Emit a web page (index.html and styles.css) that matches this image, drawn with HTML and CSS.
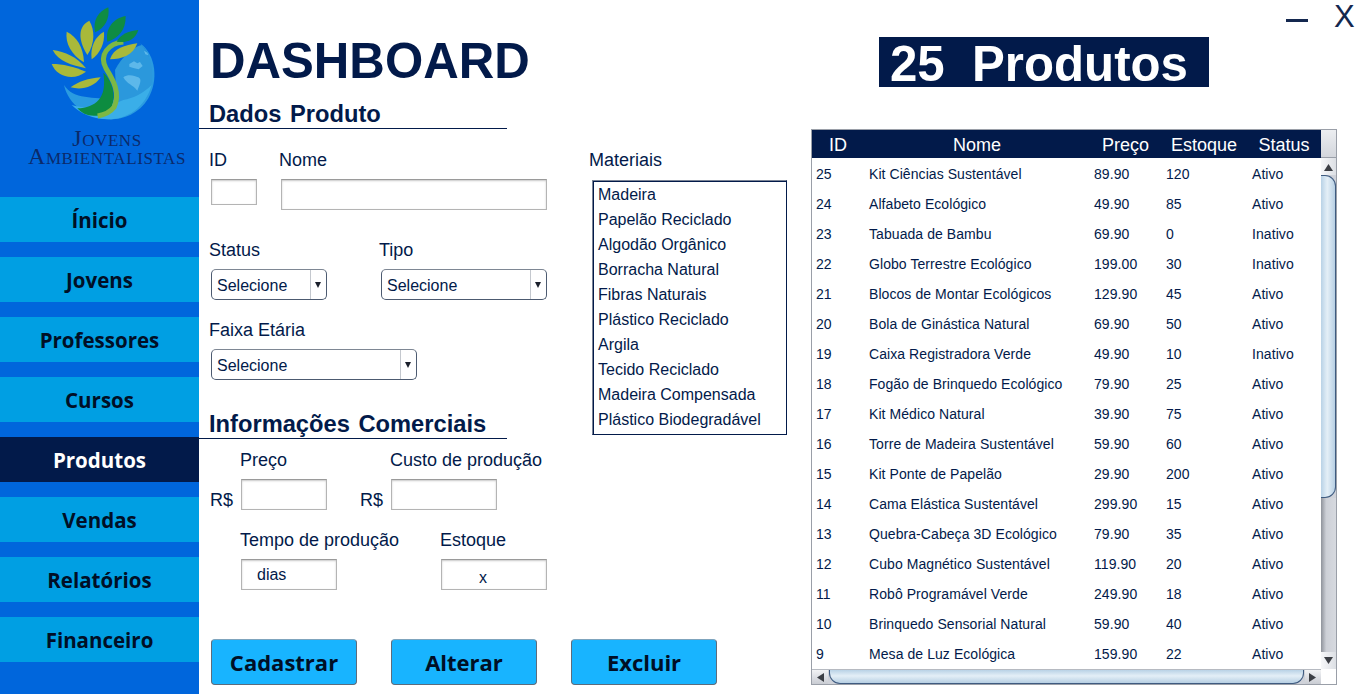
FILE: index.html
```html
<!DOCTYPE html>
<html lang="pt-BR">
<head>
<meta charset="utf-8">
<title>Dashboard</title>
<link rel="stylesheet" href="styles.css">
</head>
<body>
<div class="app">
  <aside class="sidebar">
    <div class="logo">
      <svg class="logo-art" viewBox="0 0 597 387" aria-hidden="true">
        <path fill="#2a9be0" d="M420 130C470 165 475 245 445 295C415 345 365 360 325 358C265 356 205 315 192 255C220 300 280 290 345 300C400 300 445 250 450 200C450 170 440 150 420 130Z"/>
        <path fill="#2b98dc" d="M345 210C365 170 400 140 425 135C460 170 465 240 445 280C420 300 390 310 350 305Z"/>
        <path fill="#3aaee8" d="M215 315C260 330 330 320 370 300C400 295 430 280 455 255C435 325 380 358 325 358C280 358 240 340 215 315Z"/>
        <path fill="#5db8ea" d="M370 232C385 220 405 228 415 232C428 238 418 255 412 272C400 255 380 252 370 232ZM388 192l14-8l10 6l8-4l8 12l-12 10l-16-4l-12-4ZM432 152l10 6l3 8l-9-3Z"/>
        <path fill="#0d8c40" d="M232 325C288 322 322 295 310 218C335 240 350 285 335 320C325 335 305 345 290 347C265 350 245 340 232 325Z"/>
        <path fill="none" stroke="#7db843" stroke-width="15" d="M370 126C325 130 296 165 318 205C340 240 362 280 342 322C330 338 310 345 293 348"/>
        <g fill="#a9b93a">
          <path d="M268 62C240 75 228 110 262 165C285 130 285 90 268 62Z"/>
          <path d="M200 95C195 130 215 165 252 187C250 140 230 110 200 95Z"/>
          <path d="M158 150C175 185 215 195 258 205C230 170 195 155 158 150Z"/>
          <path d="M155 192C170 230 220 245 258 215C220 200 190 192 155 192Z"/>
          <path d="M212 262C240 270 280 265 302 232C265 235 235 245 212 262Z"/>
          <path d="M312 95C285 110 270 140 275 178C300 160 315 130 312 95Z"/>
          <path d="M412 130C375 135 340 145 330 178C365 178 400 165 412 130Z"/>
        </g>
        <g fill="#0f8c43">
          <path d="M325 22C295 35 278 60 285 97C315 85 330 55 325 22Z"/>
          <path d="M377 48C340 55 315 85 322 125C355 115 378 90 377 48Z"/>
          <path d="M415 90C385 92 360 105 350 125C380 130 405 120 415 90Z"/>
        </g>
      </svg>
      <div class="logo-text">Jovens<br>Ambientalistas</div>
    </div>
    <nav class="nav">
      <a class="nav-item">Ínicio</a>
      <a class="nav-item">Jovens</a>
      <a class="nav-item">Professores</a>
      <a class="nav-item">Cursos</a>
      <a class="nav-item active">Produtos</a>
      <a class="nav-item">Vendas</a>
      <a class="nav-item">Relatórios</a>
      <a class="nav-item">Financeiro</a>
    </nav>
  </aside>

  <main class="form-col">
    <h1 class="title">DASHBOARD</h1>
    <h2 class="section">Dados Produto</h2>

    <div class="row row-first">
      <div class="field w-70"><label>ID</label><input class="input w-46 h-26"></div>
      <div class="field"><label>Nome</label><input class="input w-266"></div>
    </div>
    <div class="row gap-30">
      <div class="field w-170"><label>Status</label><div class="select w-116"><span>Selecione</span><i class="caret"></i></div></div>
      <div class="field"><label>Tipo</label><div class="select w-166"><span>Selecione</span><i class="caret"></i></div></div>
    </div>
    <div class="row gap-20">
      <div class="field"><label>Faixa Etária</label><div class="select w-206"><span>Selecione</span><i class="caret"></i></div></div>
    </div>

    <h2 class="section gap-30">Informações Comerciais</h2>

    <div class="row gap-11 indent">
      <div class="field w-150"><label>Preço</label><div class="money"><span class="cur">R$</span><input class="input w-86"></div></div>
      <div class="field"><label>Custo de produção</label><div class="money"><span class="cur">R$</span><input class="input w-106"></div></div>
    </div>
    <div class="row gap-20 indent">
      <div class="field w-200"><label>Tempo de produção</label><input class="input w-96 pad-dias" value="dias"></div>
      <div class="field"><label>Estoque</label><input class="input w-106 pad-x" value="x"></div>
    </div>

    <div class="actions">
      <button class="btn">Cadastrar</button>
      <button class="btn">Alterar</button>
      <button class="btn">Excluir</button>
    </div>
  </main>

  <section class="mat-col">
    <label class="mat-label">Materiais</label>
    <ul class="mat-list">
      <li>Madeira</li>
      <li>Papelão Reciclado</li>
      <li>Algodão Orgânico</li>
      <li>Borracha Natural</li>
      <li>Fibras Naturais</li>
      <li>Plástico Reciclado</li>
      <li>Argila</li>
      <li>Tecido Reciclado</li>
      <li>Madeira Compensada</li>
      <li>Plástico Biodegradável</li>
    </ul>
  </section>

  <section class="table-col">
    <div class="win-ctrl"><span class="win-min"></span><span class="win-close">X</span></div>
    <div class="banner-row"><div class="banner">25  Produtos</div></div>
    <div class="table-box">
      <div class="table-view">
        <table class="grid">
          <colgroup><col class="c-id"><col class="c-nome"><col class="c-preco"><col class="c-est"><col class="c-status"></colgroup>
          <thead><tr><th>ID</th><th>Nome</th><th>Preço</th><th>Estoque</th><th>Status</th></tr></thead>
          <tbody>
            <tr><td>25</td><td>Kit Ciências Sustentável</td><td>89.90</td><td>120</td><td>Ativo</td></tr>
            <tr><td>24</td><td>Alfabeto Ecológico</td><td>49.90</td><td>85</td><td>Ativo</td></tr>
            <tr><td>23</td><td>Tabuada de Bambu</td><td>69.90</td><td>0</td><td>Inativo</td></tr>
            <tr><td>22</td><td>Globo Terrestre Ecológico</td><td>199.00</td><td>30</td><td>Inativo</td></tr>
            <tr><td>21</td><td>Blocos de Montar Ecológicos</td><td>129.90</td><td>45</td><td>Ativo</td></tr>
            <tr><td>20</td><td>Bola de Ginástica Natural</td><td>69.90</td><td>50</td><td>Ativo</td></tr>
            <tr><td>19</td><td>Caixa Registradora Verde</td><td>49.90</td><td>10</td><td>Inativo</td></tr>
            <tr><td>18</td><td>Fogão de Brinquedo Ecológico</td><td>79.90</td><td>25</td><td>Ativo</td></tr>
            <tr><td>17</td><td>Kit Médico Natural</td><td>39.90</td><td>75</td><td>Ativo</td></tr>
            <tr><td>16</td><td>Torre de Madeira Sustentável</td><td>59.90</td><td>60</td><td>Ativo</td></tr>
            <tr><td>15</td><td>Kit Ponte de Papelão</td><td>29.90</td><td>200</td><td>Ativo</td></tr>
            <tr><td>14</td><td>Cama Elástica Sustentável</td><td>299.90</td><td>15</td><td>Ativo</td></tr>
            <tr><td>13</td><td>Quebra-Cabeça 3D Ecológico</td><td>79.90</td><td>35</td><td>Ativo</td></tr>
            <tr><td>12</td><td>Cubo Magnético Sustentável</td><td>119.90</td><td>20</td><td>Ativo</td></tr>
            <tr><td>11</td><td>Robô Programável Verde</td><td>249.90</td><td>18</td><td>Ativo</td></tr>
            <tr><td>10</td><td>Brinquedo Sensorial Natural</td><td>59.90</td><td>40</td><td>Ativo</td></tr>
            <tr><td>9</td><td>Mesa de Luz Ecológica</td><td>159.90</td><td>22</td><td>Ativo</td></tr>
          </tbody>
        </table>
      </div>
      <div class="vbar">
        <div class="corner"></div>
        <div class="arrow-box v"><svg width="9" height="8" viewBox="0 0 9 8"><path d="M4.5 1L9 8H0Z" fill="#3c3f45"/></svg></div>
        <div class="vthumb"></div>
        <div class="vtrack"></div>
        <div class="arrow-box v"><svg width="9" height="8" viewBox="0 0 9 8"><path d="M0 0H9L4.5 7Z" fill="#3c3f45"/></svg></div>
      </div>
      <div class="hbar">
        <div class="arrow-box h"><svg width="8" height="9" viewBox="0 0 8 9"><path d="M1 4.5L8 0V9Z" fill="#3c3f45"/></svg></div>
        <div class="hthumb"></div>
        <div class="arrow-box h"><svg width="8" height="9" viewBox="0 0 8 9"><path d="M7 4.5L0 0V9Z" fill="#3c3f45"/></svg></div>
      </div>
      <div class="hcorner"></div>
    </div>
  </section>
</div>
</body>
</html>
```
FILE: styles.css
```css
* { box-sizing: border-box; }
html, body { margin: 0; padding: 0; height: 100%; overflow: hidden; background: #fff; }
body { font-family: "Liberation Sans", Arial, sans-serif; color: #021a4a; }
.app { display: flex; width: 1355px; height: 694px; }

/* Sidebar */
.sidebar { width: 199px; height: 694px; flex: none; background: #0066dc; }
.logo { height: 197px; }
.logo-art { display: block; width: 199px; height: 129px; }
.logo-text { font-family: "Liberation Serif", serif; font-variant: small-caps; text-align: center; font-size: 24px; letter-spacing: 0.6px; line-height: 18px; color: #0b2a6b; margin-left: 15px; white-space: nowrap; }
.nav { display: flex; flex-direction: column; gap: 15px; }
.nav-item { height: 45px; display: flex; align-items: center; justify-content: center; background: #009fe3; color: #000f26; font-family: "Open Sans", sans-serif; font-weight: 700; font-size: 20.5px; }
.nav-item.active { background: #021a4a; color: #fff; }

/* Form column */
.form-col { width: 390px; flex: none; }
.title { margin: 0; height: 100px; padding: 33px 0 0 11px; font-size: 49.2px; line-height: 56px; font-weight: 700; color: #021a4a; }
.section { margin: 0; width: 308px; height: 29px; padding-left: 10px; line-height: 28px; font-size: 23.7px; word-spacing: 2px; font-weight: 700; color: #021a4a; border-bottom: 1px solid #021a4a; white-space: nowrap; }
.row { display: flex; padding-left: 10px; }
.row-first { margin-top: 21px; }
.gap-30 { margin-top: 30px; }
.gap-20 { margin-top: 20px; }
.gap-11 { margin-top: 11px; }
.indent { padding-left: 41px; }
.field { display: flex; flex-direction: column; align-items: flex-start; }
.field label, .mat-label { display: block; height: 20px; line-height: 20px; font-size: 18px; margin-bottom: 9px; white-space: nowrap; color: #021a4a; }
.w-70 { width: 70px; }
.w-170 { width: 170px; }
.w-150 { width: 150px; }
.w-200 { width: 200px; }
.input { display: block; height: 31px; margin: 0 0 0 2px; padding: 0; border: 1px solid #b4b4b4; border-top-color: #9a9a9a; box-shadow: inset 0 1px 2px #c8c8c8; background: #fff; font: 16px "Liberation Sans", Arial, sans-serif; color: #021a4a; outline: none; }
.indent .input { margin-left: 1px; }
.w-46 { width: 46px; }
.h-26 { height: 26px; }
.w-266 { width: 266px; }
.w-86 { width: 86px; }
.w-96 { width: 96px; }
.w-106 { width: 106px; }
.pad-dias { padding-left: 15px; padding-top: 1px; }
.pad-x { padding-left: 37px; padding-top: 6px; }
.select { display: flex; align-items: center; height: 31px; margin-left: 2px; border: 1px solid #4c5a70; border-top-color: #7e8794; border-radius: 5px; background: #fff; font-size: 16px; color: #021a4a; overflow: hidden; }
.select span { flex: 1; padding: 2px 0 0 5px; line-height: 27px; }
.caret { position: relative; display: block; width: 16px; height: 29px; border-left: 1px solid #c4c8ce; flex: none; }
.caret::after { content: ""; position: absolute; left: 4px; top: 12px; border-left: 3.5px solid transparent; border-right: 3.5px solid transparent; border-top: 6px solid #1a1f2b; }
.w-116 { width: 116px; }
.w-166 { width: 166px; }
.w-206 { width: 206px; }
.money { display: flex; align-items: flex-end; margin-left: -30px; }
.cur { width: 30px; font-size: 18px; line-height: 20px; color: #021a4a; }
.actions { display: flex; gap: 34px; margin: 49px 0 0 12px; }
.btn { flex: none; width: 146px; height: 46px; padding: 0; border: 1px solid #5d6c7c; border-top-color: #7fa4bd; border-radius: 4px; background: #18b4ff; color: #000f26; font-family: "Open Sans", sans-serif; font-weight: 700; font-size: 22px; }

/* Materials */
.mat-col { width: 222px; flex: none; padding-top: 150px; }
.mat-label { margin-bottom: 10px; }
.mat-list { list-style: none; width: 195px; height: 255px; margin: 0 0 0 3px; padding: 1px 0 0 5px; border: 1px solid #021a4a; border-top-color: #7b8496; border-left-color: #7b8496; box-shadow: inset 1px 1px 0 #021a4a; font-size: 16px; color: #021a4a; }
.mat-list li { height: 25px; line-height: 25px; white-space: nowrap; }

/* Right column */
.table-col { width: 544px; flex: none; display: flex; flex-direction: column; }
.win-ctrl { display: flex; justify-content: flex-end; align-items: flex-start; height: 37px; }
.win-min { width: 22px; height: 3px; margin-top: 19px; background: #14284f; }
.win-close { width: 21px; margin: 0 0 0 26px; font-size: 31px; line-height: 33px; color: #14284f; font-weight: 400; }
.banner-row { height: 92px; padding-left: 68px; }
.banner { width: 330px; height: 50px; padding-left: 11px; background: #021a4a; color: #fff; font-size: 49.2px; line-height: 54px; font-weight: 700; white-space: pre; }
.table-box { width: 526px; height: 556px; border: 1px solid #9a9fa8; display: grid; grid-template-columns: 509px 15px; grid-template-rows: 539px 15px; background: #fff; }

.table-view { overflow: hidden; }
.grid { width: 509px; table-layout: fixed; border-collapse: collapse; font-size: 14px; letter-spacing: 0.07px; color: #021a4a; }
.c-id { width: 53px; }
.c-nome { width: 225px; }
.c-preco { width: 72px; }
.c-est { width: 85px; }
.c-status { width: 74px; }
.grid thead tr { height: 28px; background: #021a4a; }
.grid th { padding: 3px 1px 0 0; font-weight: 400; font-size: 18px; letter-spacing: 0; line-height: 25px; color: #fff; text-align: center; }
.grid th:last-child { padding-right: 0; }
.grid tbody::before { content: ""; display: block; height: 1px; }
.grid tbody tr { height: 30px; }
.grid td { padding: 0 0 0 4px; line-height: 30px; white-space: nowrap; }
.grid td:nth-child(5) { padding-left: 5px; }

.vbar { display: flex; flex-direction: column; background: #cfd2d9; grid-row: 1; grid-column: 2; }
.corner { height: 28px; flex: none; background: linear-gradient(#eceef1, #d3d6dc); border-bottom: 1px solid #9a9fa8; }
.arrow-box { display: flex; align-items: center; justify-content: center; flex: none; background: linear-gradient(90deg, #f7f8fa, #dcdfe4); }
.arrow-box.v { height: 17px; }
.arrow-box.h { width: 16px; height: 15px; background: linear-gradient(#f2f3f5, #c9ccd3); }
.vthumb { height: 323px; flex: none; border: 1px solid #3f5b80; border-left: 0; border-radius: 0 11px 11px 0; background: linear-gradient(90deg, #b9d2e6, #e4eff7 45%, #b7cfe3); }
.vtrack { flex: 1; background: linear-gradient(90deg, #8f939b, #cdd0d7 35%, #d6d9df); }
.hbar { display: flex; grid-row: 2; grid-column: 1; background: #cfd2d9; align-items: stretch; border-top: 1px solid #b6bac1; }
.hbar .arrow-box.h { height: 14px; }
.hthumb { flex: 1; margin: 0 1px; border: 1px solid #3f5b80; border-top: 0; border-radius: 0 0 11px 11px; background: linear-gradient(#b9d2e6, #e4eff7 45%, #b7cfe3); }
.hcorner { grid-row: 2; grid-column: 2; background: #fff; }
```
